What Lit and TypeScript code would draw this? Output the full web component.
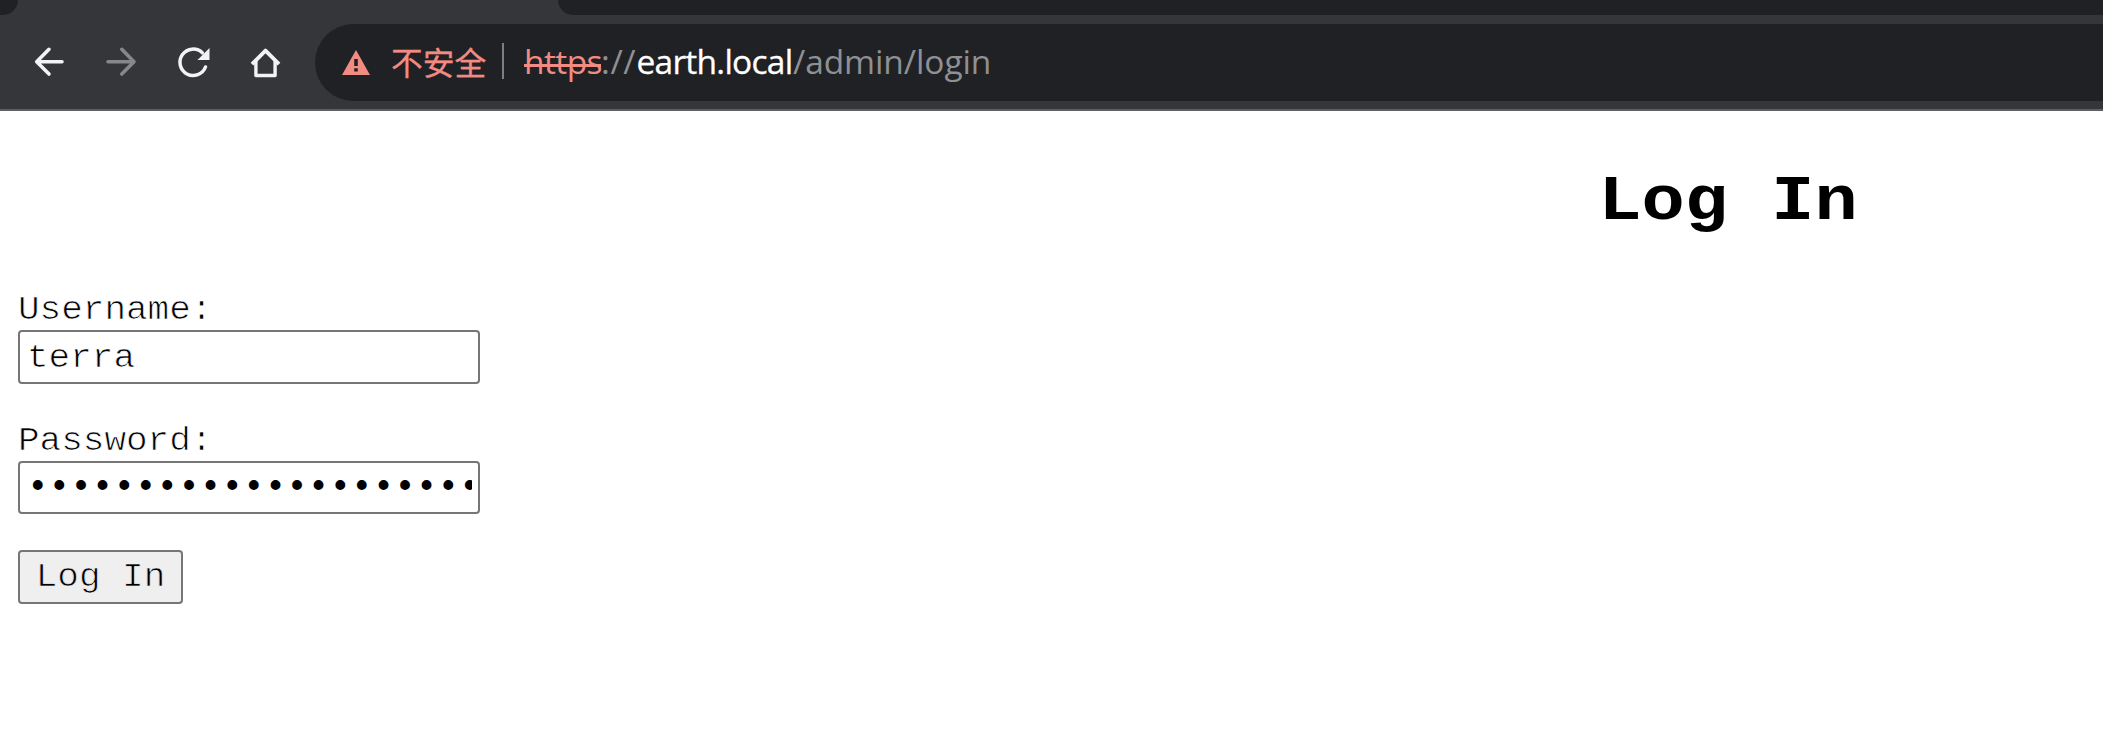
import { LitElement, html, css } from "lit";
import { customElement } from "lit/decorators.js";

@customElement("browser-toolbar")
class BrowserToolbar extends LitElement {
  static styles = css`
    :host { display: block; height: 111px; box-sizing: border-box; background: #35363a; border-bottom: 2px solid #5f6064; overflow: hidden; }
    .tabs { display: flex; justify-content: space-between; height: 15px; }
    .before { width: 18px; background: #202124; border-bottom-right-radius: 17px; }
    .after { width: 1545px; background: #202124; border-bottom-left-radius: 18px; }
    .row { display: flex; align-items: center; padding-top: 9px; }
    .nav { display: flex; width: 315px; box-sizing: border-box; padding: 0 32px 0 31px; gap: 36px; height: 77px; align-items: center; }
    .nav svg { width: 36px; height: 36px; flex: none; display: block; }
    .address { display: flex; flex: 1; height: 77px; align-items: center; background: #202124; border-radius: 38.5px 0 0 38.5px; }
    .warn { width: 28px; height: 25px; margin: 0 21px 0 27px; flex: none; }
    .state { width: 112px; font: 31.8px/40px "Noto Sans CJK SC", sans-serif; color: #f28b82; white-space: nowrap; padding-bottom: 4px; -webkit-text-stroke: 0.3px #f28b82; }
    .rule { width: 2px; height: 36px; background: #7d7e81; margin: 0 20px 3px -1px; }
    .url { display: flex; font: 33.5px/44px "Open Sans", sans-serif; white-space: nowrap; color: #8f9093; padding-bottom: 4px; }
    .scheme { width: 77px; color: #f28b82; letter-spacing: -0.6px; background: linear-gradient(#f28b82, #f28b82) 0 25px / 77px 3px no-repeat; }
    .sep { width: 35.5px; letter-spacing: 0.6px; }
    .host { width: 156.5px; color: #fff; letter-spacing: -0.75px; -webkit-text-stroke: 0.3px #fff; }
    .path { letter-spacing: -0.1px; }
  `;
  render() {
    return html`
      <div class="tabs"><div class="before"></div><div class="after"></div></div>
      <div class="row">
        <div class="nav">
          <svg viewBox="0 0 36 36" fill="none" stroke="#f1f3f4" stroke-width="3.6" stroke-linecap="round" stroke-linejoin="round"><path d="M31 16.8H6M18 4.3L5.7 16.8L18 29"/></svg>
          <svg viewBox="0 0 36 36" fill="none" stroke="#86878a" stroke-width="3.6" stroke-linecap="round" stroke-linejoin="round"><path d="M5 16.8H30M18.8 4.3L31 16.8L18.8 29"/></svg>
          <svg viewBox="0 0 36 36"><path d="M30.5 22A13.2 13.2 0 1 1 27.3 7.8" fill="none" stroke="#f1f3f4" stroke-width="3.5" stroke-linecap="round"/><path d="M34.5 3V15H22.5Z" fill="#f1f3f4"/></svg>
          <svg viewBox="0 0 36 36" fill="none" stroke="#f1f3f4" stroke-width="3.4" stroke-linejoin="round"><path d="M5 19.2L18.5 5.6L32 19.2" stroke-width="3.8"/><path d="M8.9 15.5V30.5H28.1V15.5"/></svg>
        </div>
        <div class="address">
          <svg class="warn" viewBox="0 0 28 25"><path d="M14 0L28 25H0Z" fill="#f28b82"/><path d="M12.2 9h3.6v7h-3.6zM12.2 18.3h3.6v3.3h-3.6z" fill="#202124"/></svg>
          <span class="state">不安全</span>
          <span class="rule"></span>
          <div class="url"><span class="scheme">https</span><span class="sep">://</span><span class="host">earth.local</span><span class="path">/admin/login</span></div>
        </div>
      </div>`;
  }
}

@customElement("login-page")
class LoginPage extends LitElement {
  static styles = css`
    :host { display: block; height: 634px; box-sizing: border-box; padding: 48px 18px 0; overflow: hidden; background: #fff; color: #000; font: 36px/40px "Courier New", "Liberation Mono", monospace; }
    h1 { width: 3420px; margin: 0 0 50px; font-size: 72px; line-height: 82px; text-align: center; transform: scaleY(0.88); transform-origin: 0 60px; }
    form { display: flex; flex-direction: column; align-items: flex-start; }
    label { height: 39px; line-height: 38px; transform: scaleY(0.9); transform-origin: 0 29px; }
    .thin { -webkit-text-stroke: 0.8px #fff; }
    .field, button { box-sizing: border-box; border: 2px solid #767676; border-radius: 4px; }
    .field { display: flex; width: 462px; height: 54px; background: #fff; padding: 0 6px 0 7px; margin-bottom: 38px; }
    .password { height: 53px; margin-bottom: 36px; }
    input { flex: 1; min-width: 0; height: 100%; box-sizing: border-box; padding: 0; margin: 0; border: 0; outline: none; background: none; font: inherit; color: #000; }
    .plain { transform: scaleY(0.9); transform-origin: 0 35px; }
    button { width: 165px; height: 54px; margin: 0; padding: 0; font: inherit; color: #000; background: #efefef; -webkit-text-stroke: 0.8px #efefef; }
    .caption { display: block; transform: scaleY(0.9); transform-origin: 0 30px; }
  `;
  render() {
    return html`
      <h1>Log In</h1>
      <form>
        <label class="thin" for="u">Username:</label>
        <div class="field"><input class="thin plain" id="u" type="text" value="terra" /></div>
        <label class="thin" for="p">Password:</label>
        <div class="field password"><input id="p" type="password" value="aaaaaaaaaaaaaaaaaaaaaaaa" /></div>
        <button type="button"><span class="caption">Log In</span></button>
      </form>`;
  }
}

@customElement("app-root")
class AppRoot extends LitElement {
  static styles = css`:host { display: block; width: 2103px; height: 745px; overflow: hidden; }`;
  render() {
    return html`<browser-toolbar></browser-toolbar><login-page></login-page>`;
  }
}
